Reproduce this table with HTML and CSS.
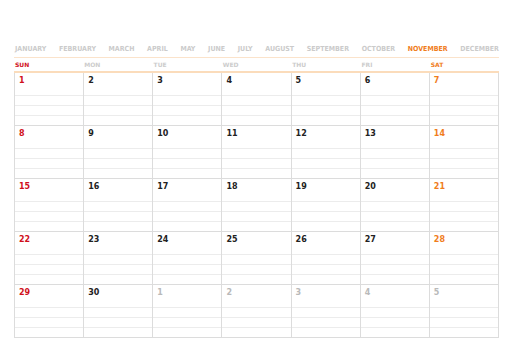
FILE: index.html
```html
<!DOCTYPE html>
<html lang="en">
<head>
    <meta charset="UTF-8">
    <title>November Calendar</title>
    <link rel="stylesheet" href="styles.css">
</head>
<body>
    <div class="calendar">
        <div class="months">
            <span>JANUARY</span>
            <span>FEBRUARY</span>
            <span>MARCH</span>
            <span>APRIL</span>
            <span>MAY</span>
            <span>JUNE</span>
            <span>JULY</span>
            <span>AUGUST</span>
            <span>SEPTEMBER</span>
            <span>OCTOBER</span>
            <span class="current">NOVEMBER</span>
            <span>DECEMBER</span>
        </div>
        <div class="weekdays">
            <span class="sun">SUN</span>
            <span>MON</span>
            <span>TUE</span>
            <span>WED</span>
            <span>THU</span>
            <span>FRI</span>
            <span class="sat">SAT</span>
        </div>
        <div class="days" id="days"></div>
    </div>
    <script>
        const days = document.getElementById("days");
        for (let i = 0; i < 35; i++) {
            const num = i < 30 ? i + 1 : i - 29;
            let cls = "day";
            if (i >= 30) cls += " other";
            else if (i % 7 === 0) cls += " sun";
            else if (i % 7 === 6) cls += " sat";
            days.innerHTML += `<div class="${cls}"><span class="num">${num}</span><div class="line"></div><div class="line"></div><div class="line"></div></div>`;
        }
    </script>
</body>
</html>
```

FILE: styles.css
```css
body {
    margin: 0;
    background-color: #fff;
    font-family: 'DejaVu Sans', Arial, sans-serif;
}
.calendar {
    width: 485px;
    margin: 43px 0 0 14px;
}
.months {
    display: flex;
    justify-content: space-between;
    padding: 0 0 0 1px;
    height: 14px;
    border-bottom: 1px solid #fbe3cb;
    font-size: 7px;
    font-weight: bold;
    font-stretch: condensed;
    color: #cbcbcb;
    line-height: 13px;
}
.months .current {
    color: #f07d1c;
}
.weekdays {
    display: grid;
    grid-template-columns: repeat(7, 1fr);
    height: 13px;
    line-height: 14px;
    border-bottom: 2px solid #fbdcbb;
    font-size: 6px;
    font-weight: bold;
    color: #cccccc;
}
.weekdays span {
    padding-left: 1px;
}
.weekdays .sun {
    color: #d0101b;
}
.weekdays .sat {
    color: #f07d1c;
}
.days {
    display: grid;
    grid-template-columns: repeat(7, 1fr);
    border-left: 1px solid #dcdcdc;
}
.day {
    height: 53px;
    border-right: 1px solid #dcdcdc;
    border-bottom: 1px solid #dcdcdc;
    box-sizing: border-box;
    display: flex;
    flex-direction: column;
}
.day .num {
    height: 22px;
    padding: 2px 0 0 4px;
    box-sizing: border-box;
    font-size: 8px;
    font-weight: bold;
    line-height: 12px;
    color: #222;
}
.day .line {
    flex: 1;
    border-top: 1px solid #ececec;
}
.day.sun .num {
    color: #d0101b;
}
.day.sat .num {
    color: #f07d1c;
}
.day.other .num {
    color: #b9b9b9;
}
```
